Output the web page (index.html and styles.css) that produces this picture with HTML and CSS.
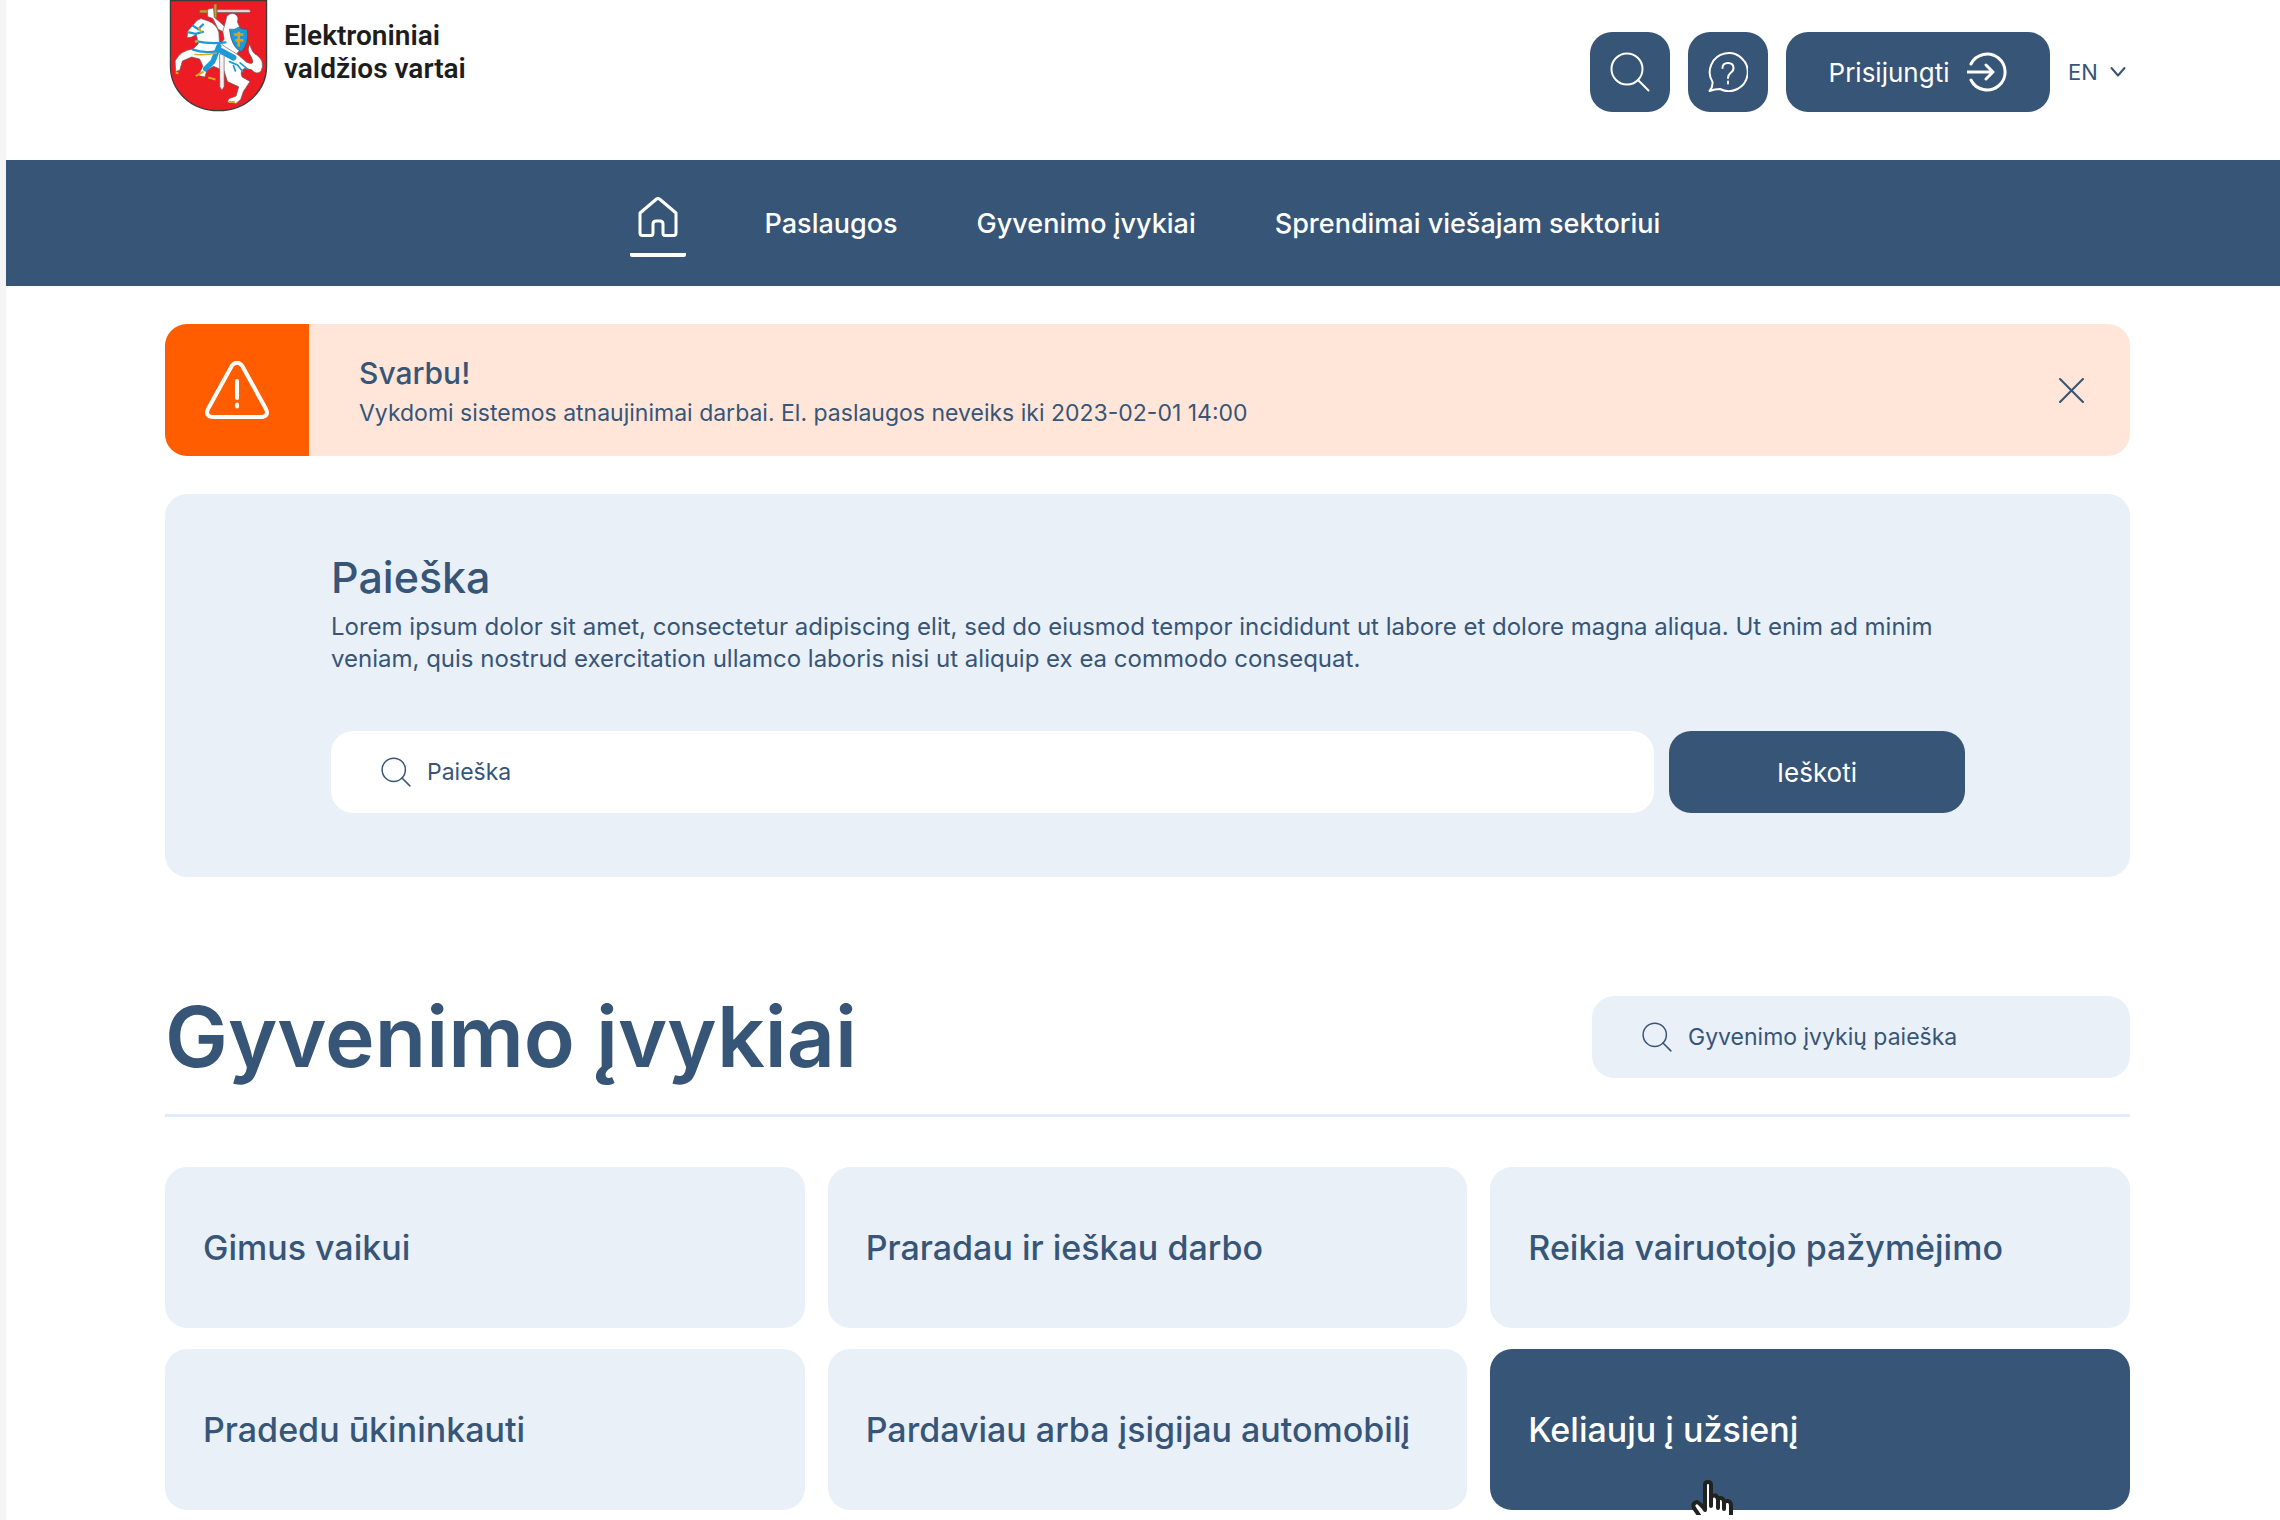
FILE: index.html
```html
<!DOCTYPE html>
<html lang="lt">
<head>
<meta charset="utf-8">
<meta name="viewport" content="width=device-width, initial-scale=1">
<title>Elektroniniai valdžios vartai</title>
<link rel="stylesheet" href="styles.css">
</head>
<body>
<svg class="sprite" aria-hidden="true">
  <symbol id="search" viewBox="0 0 40 40"><circle cx="17" cy="17" r="15.5"/><path d="M28 28l10.5 10.5"/></symbol>
</svg>

<header class="header wrap">
  <a class="brand" href="#">
    <svg class="brand-arms" viewBox="56 0 298 338" role="img" aria-label="Herbas">
      <path d="M60 2H350V200C350 272 290 334 205 334C120 334 60 272 60 200Z" fill="#ec1c24" stroke="#3b3b3b" stroke-width="4"/>
      <g stroke="#6b5a5c" stroke-width="2" stroke-linejoin="round">
        <path d="M200 29L298 29L302 34L298 38L200 38Z" fill="#dcdcdc"/>
        <path d="M148 30h26v9h-26z" fill="#d99a1c"/>
        <path d="M191 12h9v42h-9z" fill="#d99a1c"/>
        <path d="M172 28L190 24L192 52L208 66L226 82L224 98L204 88L188 56L172 50Z" fill="#fff"/>
        <path d="M230 50Q238 38 254 42Q268 50 262 66L270 84L282 96L270 150L254 170L222 160L206 140L222 118L218 96Z" fill="#fff"/>
        <path d="M140 62L152 56L176 64Q200 74 206 98L208 128L226 142L262 164L290 188Q318 200 304 172Q288 150 300 134Q306 160 320 166Q346 184 334 214Q320 228 304 210L284 206Q268 214 276 232L300 246L280 276L272 300L258 312L232 308L236 298L258 290L266 262L232 246L222 214L190 200L170 212L164 232L144 228L158 200L148 178L124 172L96 184L88 212L76 216L74 184Q90 152 128 148L144 132L138 104L124 112L110 114L112 94L126 78Z" fill="#fff"/>
        <path d="M208 164L222 160V262L215 272L209 262Z" fill="#f2f2f2"/>
      </g>
      <g fill="none" stroke="#1c9ad6" stroke-width="7" stroke-linecap="round">
        <path d="M128 78L144 88L158 74M116 98L136 102L158 96M136 124Q180 134 226 128M128 150Q160 162 204 154"/>
        <path d="M206 140L188 186L166 208" stroke-width="16"/>
        <path d="M214 154L250 174" stroke-width="18"/>
        <path d="M238 186L262 196L278 216M250 198L256 214M270 190L292 208" stroke-width="5"/>
      </g>
      <path d="M238 88Q254 92 266 82Q278 90 292 88Q298 132 274 156Q244 144 238 88Z" fill="#1c9ad6" stroke="#35536b" stroke-width="2"/>
      <g fill="none" stroke="#e0a21b" stroke-width="6">
        <path d="M266 96V140M252 104H280M256 122H280" stroke-width="8"/>
        <path d="M132 164Q166 168 200 160" stroke-width="4"/>
        <path d="M144 82L154 98M76 218L84 222M136 230L160 216M174 234L196 240M236 308H254M134 128l10 -6"/>
      </g>
    </svg>
    <span class="brand-name">Elektroniniai<br>valdžios vartai</span>
  </a>
  <div class="actions">
    <button class="btn btn-icon" type="button" aria-label="Paieška"><svg class="icon icon-lg"><use href="#search"/></svg></button>
    <button class="btn btn-icon" type="button" aria-label="Pagalba">
      <svg class="icon icon-lg" viewBox="0 0 40 40"><path d="M4.500 30A19 19 0 1 1 12 37Q7 37 1.500 39Q5 35 4.500 30Z"/><path d="M14.500 16Q14.500 11 20 11Q25.500 11 25.500 16Q25.500 19 22.500 21Q20 23 20 26M20 29.500v2"/></svg>
    </button>
    <button class="btn btn-login" type="button">Prisijungti
      <svg class="icon icon-lg" viewBox="0 0 40 40"><path d="M4 12A18 18 0 1 1 4 28M0 20H26M19 13L26 20L19 27"/></svg>
    </button>
    <div class="lang">
      <select class="lang-select" aria-label="Kalba"><option>EN</option><option>LT</option></select>
      <svg class="icon lang-arrow" viewBox="0 0 16 12"><path d="M1.500 2L8 9.500L14.500 2"/></svg>
    </div>
  </div>
</header>

<nav class="nav" aria-label="Pagrindinis meniu">
  <a class="nav-home" href="#" aria-label="Pradžia">
    <svg class="icon icon-lg" viewBox="0 0 40 40"><path d="M2 16L18.500 2Q20 1 21.500 2L38 16V36Q38 38.500 35.500 38.500H27Q25 38.500 25 36V27Q25 24 22 24H18Q15 24 15 27V36Q15 38.500 13 38.500H4.500Q2 38.500 2 36Z"/></svg>
  </a>
  <a class="nav-link" href="#">Paslaugos</a>
  <a class="nav-link" href="#">Gyvenimo įvykiai</a>
  <a class="nav-link" href="#">Sprendimai viešajam sektoriui</a>
</nav>

<main class="main wrap">
  <section class="alert" role="alert">
    <div class="alert-mark">
      <svg class="icon alert-icon" viewBox="0 0 64 58"><path d="M27 4.500Q32 -1 37 4.500L61 48Q64 55 57 56H7Q0 55 3 48ZM32 20V37M32 43.500v2"/></svg>
    </div>
    <div class="alert-body">
      <h2 class="alert-title">Svarbu!</h2>
      <p class="alert-text">Vykdomi sistemos atnaujinimai darbai. El. paslaugos neveiks iki 2023-02-01 14:00</p>
    </div>
    <button class="alert-close" type="button" aria-label="Uždaryti"><svg class="icon icon-close" viewBox="0 0 24 24"><path d="M1 1L23 23M23 1L1 23"/></svg></button>
  </section>

  <section class="panel">
    <h2 class="panel-title">Paieška</h2>
    <p class="panel-text">Lorem ipsum dolor sit amet, consectetur adipiscing elit, sed do eiusmod tempor incididunt ut labore et dolore magna aliqua. Ut enim ad minim veniam, quis nostrud exercitation ullamco laboris nisi ut aliquip ex ea commodo consequat.</p>
    <form class="search-row">
      <label class="field field-white">
        <svg class="icon icon-sm"><use href="#search"/></svg>
        <input class="field-input" type="text" placeholder="Paieška" aria-label="Paieška">
      </label>
      <button class="btn btn-search" type="button">Ieškoti</button>
    </form>
  </section>

  <section class="events">
    <div class="events-head">
      <h1 class="events-title">Gyvenimo įvykiai</h1>
      <label class="field field-events">
        <svg class="icon icon-sm"><use href="#search"/></svg>
        <input class="field-input" type="text" placeholder="Gyvenimo įvykių paieška" aria-label="Gyvenimo įvykių paieška">
      </label>
    </div>
    <div class="cards">
      <a class="card" href="#">Gimus vaikui</a>
      <a class="card" href="#">Praradau ir ieškau darbo</a>
      <a class="card" href="#">Reikia vairuotojo pažymėjimo</a>
      <a class="card" href="#">Pradedu ūkininkauti</a>
      <a class="card" href="#">Pardaviau arba įsigijau automobilį</a>
      <a class="card card-active" href="#">Keliauju į užsienį
        <svg class="pointer" viewBox="0 0 42 52" aria-hidden="true"><path d="M14 30V5Q14 2 17 2T20 5V17Q25 13 27 19Q32 16 33 22Q40 19 40 26V36Q39 44 35 50H16Q13 42 3 28Q1 23 6 22Q10 24 14 30Z"/><path d="M20 17V26M27 19V28M33 22V29"/></svg>
      </a>
    </div>
  </section>
</main>
</body>
</html>
```
FILE: styles.css
```css
* { box-sizing: border-box; }

:root {
  --navy: #375577;
  --pale: #e9f0f8;
  --radius: 22px;
}

body {
  margin: 0;
  min-height: 100vh;
  border-left: 6px solid #f5f5f5;
  background: #fff;
  color: var(--navy);
  font-family: Inter, "Liberation Sans", sans-serif;
  font-size: 24px;
}

h1, h2, p { margin: 0; font-weight: 500; }
a { color: inherit; text-decoration: none; }
button, input, select { font: inherit; color: inherit; border: 0; padding: 0; background: none; }
button { cursor: pointer; }

.sprite { display: none; }
.wrap { padding-left: 159px; padding-right: 150px; }

.icon { flex: none; fill: none; stroke: currentColor; stroke-width: 2; stroke-linecap: round; stroke-linejoin: round; }
.icon-lg { width: 40px; height: 40px; }
.icon-sm { width: 30px; height: 30px; }
.icon-close { width: 25px; height: 25px; }

/* Header */
.header { display: flex; justify-content: space-between; align-items: flex-start; height: 160px; }
.brand { display: flex; gap: 16px; padding-left: 4px; }
.brand-arms { width: 99px; height: 112px; }
.brand-name { padding-top: 19px; color: #1d1d1d; font: 600 28px/33px Roboto, sans-serif; }
.actions { display: flex; align-items: center; gap: 18px; padding-top: 32px; }

.btn { display: flex; align-items: center; justify-content: center; height: 80px; border-radius: var(--radius); background: var(--navy); color: #fff; font-size: 26px; }
.btn-icon { width: 80px; }
.btn-login { gap: 18px; width: 264px; }
.btn-login .icon { stroke-width: 3; }

.lang { display: flex; align-items: center; gap: 12px; padding-right: 4px; }
.lang-select { appearance: none; font-size: 22px; }
.lang-arrow { width: 16px; height: 12px; pointer-events: none; }

/* Navigation */
.nav { display: flex; align-items: center; justify-content: center; gap: 79px; height: 126px; padding-left: 4px; background: var(--navy); color: #fff; font-size: 27px; font-weight: 500; }
.nav-home { display: flex; justify-content: center; width: 56px; padding-top: 8px; padding-bottom: 16px; border-bottom: 4px solid #fff; border-radius: 2px; }
.nav-home .icon { stroke-width: 3; }

/* Alert */
.main { display: grid; gap: 38px; padding-top: 38px; padding-bottom: 5px; overflow: hidden; }
.alert { display: flex; align-items: center; height: 132px; border-radius: var(--radius); background: #ffe6d9; overflow: hidden; }
.alert-mark { display: flex; align-items: center; justify-content: center; width: 144px; height: 100%; background: #ff5d00; color: #fff; }
.alert-icon { width: 64px; height: 58px; stroke-width: 4; }
.alert-body { flex: 1; padding-top: 6px; padding-left: 50px; }
.alert-title { font-size: 30px; line-height: 40px; }
.alert-text { font-size: 23px; font-weight: 400; line-height: 40px; }
.alert-close { display: flex; margin-right: 46px; }

/* Search panel */
.panel { padding: 56px 165px 64px 166px; border-radius: var(--radius); background: var(--pale); }
.panel-title { font-size: 43px; line-height: 54px; }
.panel-text { margin-top: 7px; font-weight: 400; line-height: 32px; }
.search-row { display: flex; gap: 15px; margin-top: 56px; }
.field { display: flex; align-items: center; gap: 16px; height: 82px; padding: 0 50px; border-radius: var(--radius); }
.field-white { flex: 1; background: #fff; }
.field-input { flex: 1; min-width: 0; height: 100%; font-size: 23px; outline: 0; }
.field-input::placeholder { color: inherit; opacity: 1; }
.btn-search { width: 296px; height: 82px; }

/* Life events */
.events { padding-top: 71px; }
.events-head { display: flex; align-items: center; justify-content: space-between; padding: 10px 0 36px; border-bottom: 3px solid #e4ebf8; }
.events-title { font-size: 84px; font-weight: 600; line-height: 82px; }
.field-events { width: 538px; background: var(--pale); }
.cards { display: grid; grid-template-columns: repeat(3, 1fr); gap: 21px 23px; padding-top: 50px; }
.card { position: relative; display: flex; align-items: center; height: 161px; padding: 0 38px; border-radius: var(--radius); background: var(--pale); font-size: 34px; font-weight: 500; white-space: nowrap; }
.card-active { background: var(--navy); color: #fff; }
.pointer { position: absolute; left: 201px; top: 131px; width: 42px; height: 52px; fill: #fff; stroke: #222; stroke-width: 4; stroke-linejoin: round; stroke-linecap: round; }
```
